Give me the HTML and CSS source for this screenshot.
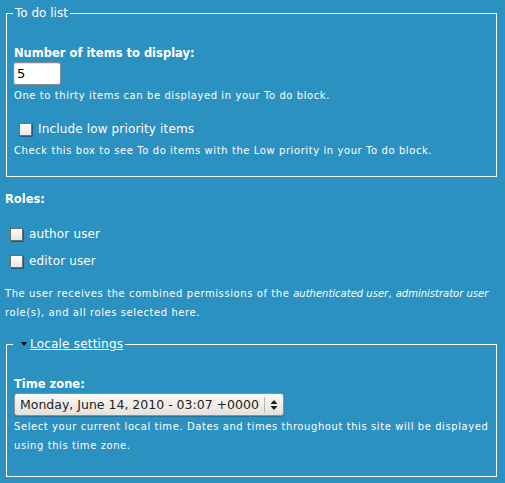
FILE: index.html
```html
<!DOCTYPE html>
<html>
<head>
    <title>User settings</title>
    <link rel="stylesheet" href="styles.css">
</head>
<body>
<div class="page">
    <fieldset class="group">
        <legend>To do list</legend>
        <div class="form-item">
            <label class="field-label" for="todoCount">Number of items to display:</label>
            <input type="text" id="todoCount" class="small-input" value="5" size="4">
            <div class="description">One to thirty items can be displayed in your To do block.</div>
        </div>
        <div class="form-item checkbox-item">
            <label class="option"><input type="checkbox" class="check"> Include low priority items</label>
            <div class="description">Check this box to see To do items with the Low priority in your To do block.</div>
        </div>
    </fieldset>

    <div class="form-item roles">
        <label class="field-label">Roles:</label>
        <div class="role-list">
            <label class="option"><input type="checkbox" class="check"> author user</label>
            <label class="option"><input type="checkbox" class="check"> editor user</label>
        </div>
        <div class="description">The user receives the combined permissions of the <em>authenticated user</em>, <em>administrator user</em> role(s), and all roles selected here.</div>
    </div>

    <fieldset class="group locale">
        <legend><span class="arrow"></span><a href="#" class="legend-link">Locale settings</a></legend>
        <div class="form-item">
            <label class="field-label" for="timezone">Time zone:</label>
            <div class="select-wrap">
                <select id="timezone" class="select">
                    <option>Monday, June 14, 2010 - 03:07 +0000</option>
                </select>
                <span class="select-arrows">
                    <svg width="8" height="12" viewBox="0 0 8 12"><path d="M4 1 L7.5 5 L0.5 5 Z M4 11 L7.5 7 L0.5 7 Z" fill="#1a1a1a"/></svg>
                </span>
            </div>
            <div class="description">Select your current local time. Dates and times throughout this site will be displayed using this time zone.</div>
        </div>
    </fieldset>
</div>
</body>
</html>
```

FILE: styles.css
```css
html, body {
    margin: 0;
    padding: 0;
    background-color: #2a91c1;
}

body {
    font-family: "DejaVu Sans", Verdana, sans-serif;
    font-size: 12px;
    color: #fff;
}

.page {
    padding: 6px 8px 0 5px;
}

.group {
    margin: 0 0 0 1px;
    padding: 0 2px 16px 7px;
    border: 1px solid #fff;
}

.group legend {
    padding: 0 2px;
    margin-left: -1px;
    line-height: 15px;
}

.form-item {
    margin: 0;
}

.field-label {
    display: block;
    font-weight: bold;
    font-size: 11.5px;
    line-height: 15px;
}

.group .form-item:first-of-type {
    padding-top: 25px;
}

.small-input {
    display: block;
    box-sizing: border-box;
    width: 48px;
    height: 23px;
    margin: 1px 0 0 -1px;
    padding: 2px 3px;
    font-family: "DejaVu Sans", sans-serif;
    font-size: 13px;
    color: #000;
    background: #fff;
    border: 1px solid #8b8b8b;
    border-radius: 3px;
    box-shadow: inset 1px 1px 1px rgba(0, 0, 0, 0.15);
    outline: none;
}

.description {
    font-size: 10px;
    letter-spacing: 0.58px;
    line-height: 19px;
    margin-top: 1px;
}

.description em {
    letter-spacing: 0;
}

.checkbox-item {
    padding: 17px 0 0 0;
}

.option {
    display: flex;
    align-items: center;
    font-size: 12px;
    letter-spacing: 0.15px;
    line-height: 15px;
}

.checkbox-item .option {
    margin-left: 5px;
    margin-bottom: 4px;
}

.check {
    appearance: none;
    -webkit-appearance: none;
    box-sizing: border-box;
    width: 13px;
    height: 13px;
    margin: 0 6px 0 0;
    border: 1px solid #6d6d6d;
    border-radius: 1px;
    background: linear-gradient(#ffffff, #e6e6e6);
    box-shadow: 1px 1px 0 rgba(0, 0, 0, 0.35);
}

.roles {
    padding-top: 15px;
}

.role-list {
    padding: 20px 0 15px 5px;
    display: flex;
    flex-direction: column;
    gap: 12px;
}

.roles .description {
    margin-top: 0;
}

.locale {
    margin-top: 15px;
    padding-bottom: 21px;
}

.arrow {
    display: inline-block;
    width: 0;
    height: 0;
    margin: 0 3px 2px 6px;
    border-left: 3.5px solid transparent;
    border-right: 3.5px solid transparent;
    border-top: 4px solid #000;
    vertical-align: middle;
}

.legend-link {
    color: #fff;
    text-decoration: underline;
    letter-spacing: 0.2px;
}

.select-wrap {
    position: relative;
    width: 270px;
    margin-top: 1px;
}

.select {
    appearance: none;
    -webkit-appearance: none;
    box-sizing: border-box;
    width: 270px;
    height: 23px;
    padding: 0 0 0 5px;
    font-family: "DejaVu Sans", sans-serif;
    font-size: 12.5px;
    color: #222;
    border: 1px solid #8f8f8f;
    border-radius: 3px;
    background: linear-gradient(#fbfaf8, #e4e1db);
    box-shadow: 0 1px 1px rgba(0, 0, 0, 0.2);
    outline: none;
}

.select-arrows {
    position: absolute;
    top: 4px;
    right: 1px;
    width: 18px;
    height: 15px;
    border-left: 1px solid #b9b6b0;
    display: flex;
    align-items: center;
    justify-content: center;
    pointer-events: none;
}
```
